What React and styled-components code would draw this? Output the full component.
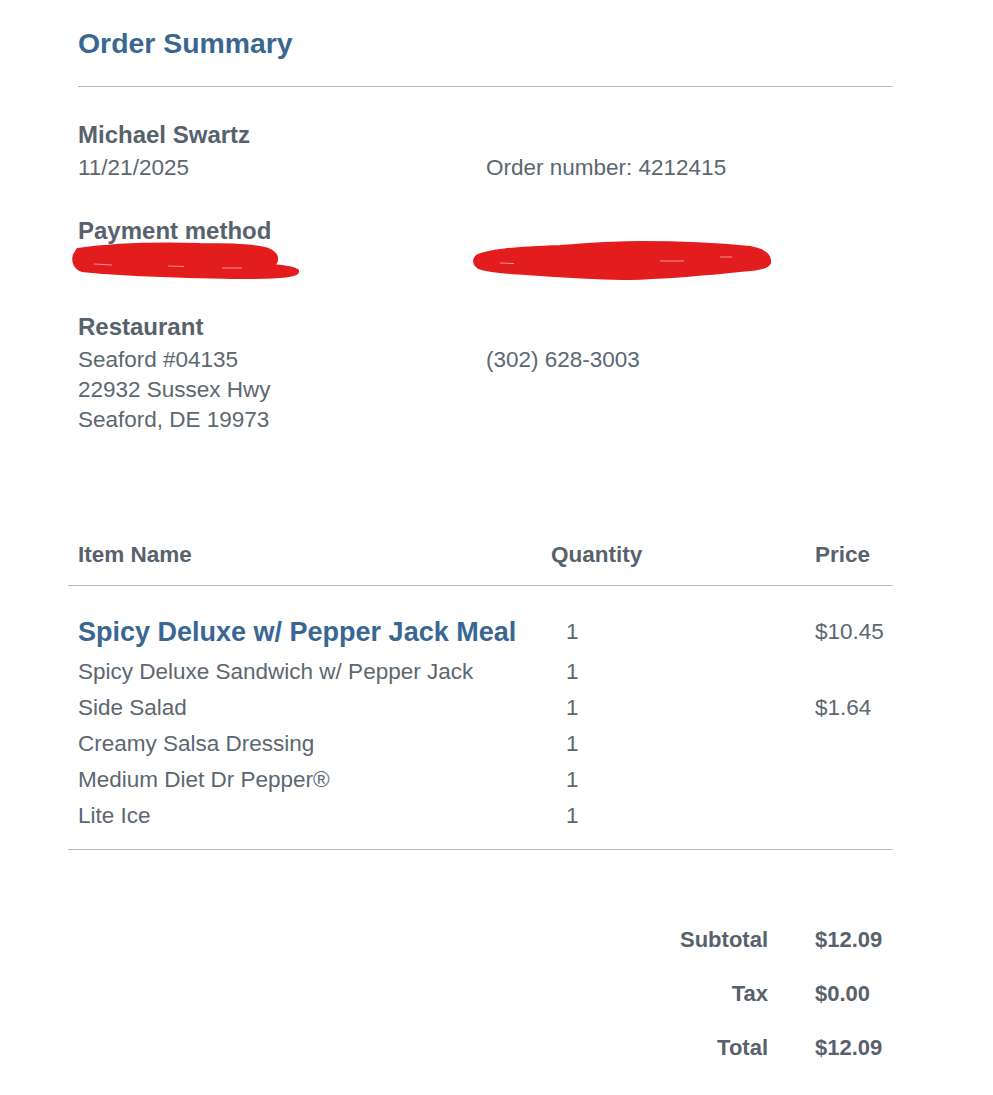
import React from 'react'
import styled, { createGlobalStyle } from 'styled-components'

const GlobalStyle = createGlobalStyle`
  body {
    margin: 0;
    background: #ffffff;
    font-family: 'Liberation Sans', Arial, sans-serif;
    color: #5c6770;
  }
`

const Page = styled.div`
  width: 815px;
  padding: 26px 0 21px 78px;
`
const Title = styled.h1`
  margin: 0;
  font-size: 28.4px;
  line-height: 34px;
  font-weight: 700;
  color: #3a6792;
`
const Rule = styled.div`
  height: 1px;
  background: #b7bbbf;
  margin-top: 26px;
`
const Sections = styled.div`
  display: grid;
  gap: 30px;
  padding-top: 30px;
`
const Section = styled.section``
const Label = styled.div`
  font-size: 24px;
  line-height: 36px;
  font-weight: 700;
  color: #57626c;
`
const Columns = styled.div`
  display: grid;
  grid-template-columns: 408px 407px;
`
const Line = styled.div`
  font-size: 22.5px;
  line-height: 30px;
`
const Redacted = styled.div`
  position: relative;
  height: 30px;
  svg {
    position: absolute;
    left: ${(p) => p.$dx}px;
    top: ${(p) => p.$dy}px;
  }
`

const Table = styled.div`
  margin: 95px 0 0 -10px;
  width: 825px;
`
const Row = styled.div`
  display: grid;
  grid-template-columns: 473px 264px 88px;
`
const HeaderRow = styled(Row)`
  padding: 10px 0 15px;
  border-bottom: 1px solid #b7bbbf;
  font-size: 22.5px;
  line-height: 30px;
  font-weight: 700;
  color: #57626c;
`
const Body = styled.div`
  padding: 24px 0 15px;
  border-bottom: 1px solid #b7bbbf;
`
const ItemRow = styled(Row)`
  font-size: 22.5px;
  line-height: ${(p) => (p.$meal ? 44 : 36)}px;
`
const Cell = styled.div`
  padding-left: ${(p) => p.$pad || 10}px;
  white-space: nowrap;
`
const MealName = styled(Cell)`
  font-size: 27px;
  font-weight: 700;
  color: #3a6792;
`
const Totals = styled.div`
  margin: 63px 0 0 -10px;
`
const TotalRow = styled(Row)`
  font-size: 22px;
  line-height: 54px;
  font-weight: 700;
  color: #57626c;
`
const TotalLabel = styled.div`
  grid-column: 2;
  text-align: right;
  padding-right: 37px;
`

const RED = '#e31c1d'

const LeftScribble = () => (
  <svg width='232' height='44' viewBox='0 0 232 44'>
    <path
      d='M6 11 C40 6 90 5 128 6 C160 6 185 7 196 11 C206 15 206 22 200 27 C212 28 222 29 225 32 C226 36 210 38 178 38 C150 38 118 37 90 36 C60 35 30 33 10 31 C3 28 1 22 3 16 Z'
      fill={RED}
      stroke={RED}
      strokeWidth='4'
      strokeLinejoin='round'
    />
    <path d='M22 25 L40 26 M96 27 L112 27.5 M150 29 L170 29' stroke='#f6b5b5' strokeWidth='1' opacity='0.8' />
  </svg>
)

const RightScribble = () => (
  <svg width='304' height='46' viewBox='0 0 304 46'>
    <path
      d='M8 19 C20 14 40 12 90 10 C120 8 140 6 170 6 C210 6 250 8 280 11 C296 14 300 20 299 26 C296 31 285 32 260 34 C230 37 195 40 160 41 C130 41 100 39 70 37 C40 35 20 34 9 30 C4 27 4 22 8 19 Z'
      fill={RED}
      stroke={RED}
      strokeWidth='4'
      strokeLinejoin='round'
    />
    <path d='M30 26 L44 26.5 M190 24 L214 24 M250 20 L262 20' stroke='#f6b5b5' strokeWidth='1' opacity='0.8' />
  </svg>
)

const items = [
  { name: 'Spicy Deluxe Sandwich w/ Pepper Jack', qty: 1 },
  { name: 'Side Salad', qty: 1, price: '$1.64' },
  { name: 'Creamy Salsa Dressing', qty: 1 },
  { name: 'Medium Diet Dr Pepper®', qty: 1 },
  { name: 'Lite Ice', qty: 1 },
]

const totals = [
  ['Subtotal', '$12.09'],
  ['Tax', '$0.00'],
  ['Total', '$12.09'],
]

const App = () => {
  return (
    <Page>
      <GlobalStyle />
      <Title>Order Summary</Title>
      <Rule />
      <Sections>
        <Section>
          <Label>Michael Swartz</Label>
          <Columns>
            <Line>11/21/2025</Line>
            <Line>Order number: 4212415</Line>
          </Columns>
        </Section>
        <Section>
          <Label>Payment method</Label>
          <Columns>
            <Redacted $dx={-6} $dy={-10}>
              <LeftScribble />
            </Redacted>
            <Redacted $dx={-16} $dy={-12}>
              <RightScribble />
            </Redacted>
          </Columns>
        </Section>
        <Section>
          <Label>Restaurant</Label>
          <Columns>
            <div>
              <Line>Seaford #04135</Line>
              <Line>22932 Sussex Hwy</Line>
              <Line>Seaford, DE 19973</Line>
            </div>
            <Line>(302) 628-3003</Line>
          </Columns>
        </Section>
      </Sections>

      <Table>
        <HeaderRow>
          <Cell>Item Name</Cell>
          <Cell>Quantity</Cell>
          <Cell>Price</Cell>
        </HeaderRow>
        <Body>
          <ItemRow $meal>
            <MealName>Spicy Deluxe w/ Pepper Jack Meal</MealName>
            <Cell $pad={25}>1</Cell>
            <Cell>$10.45</Cell>
          </ItemRow>
          {items.map((item) => (
            <ItemRow key={item.name}>
              <Cell>{item.name}</Cell>
              <Cell $pad={25}>{item.qty}</Cell>
              <Cell>{item.price || ''}</Cell>
            </ItemRow>
          ))}
        </Body>
      </Table>

      <Totals>
        {totals.map(([label, value]) => (
          <TotalRow key={label}>
            <TotalLabel>{label}</TotalLabel>
            <Cell>{value}</Cell>
          </TotalRow>
        ))}
      </Totals>
    </Page>
  )
}

export default App
